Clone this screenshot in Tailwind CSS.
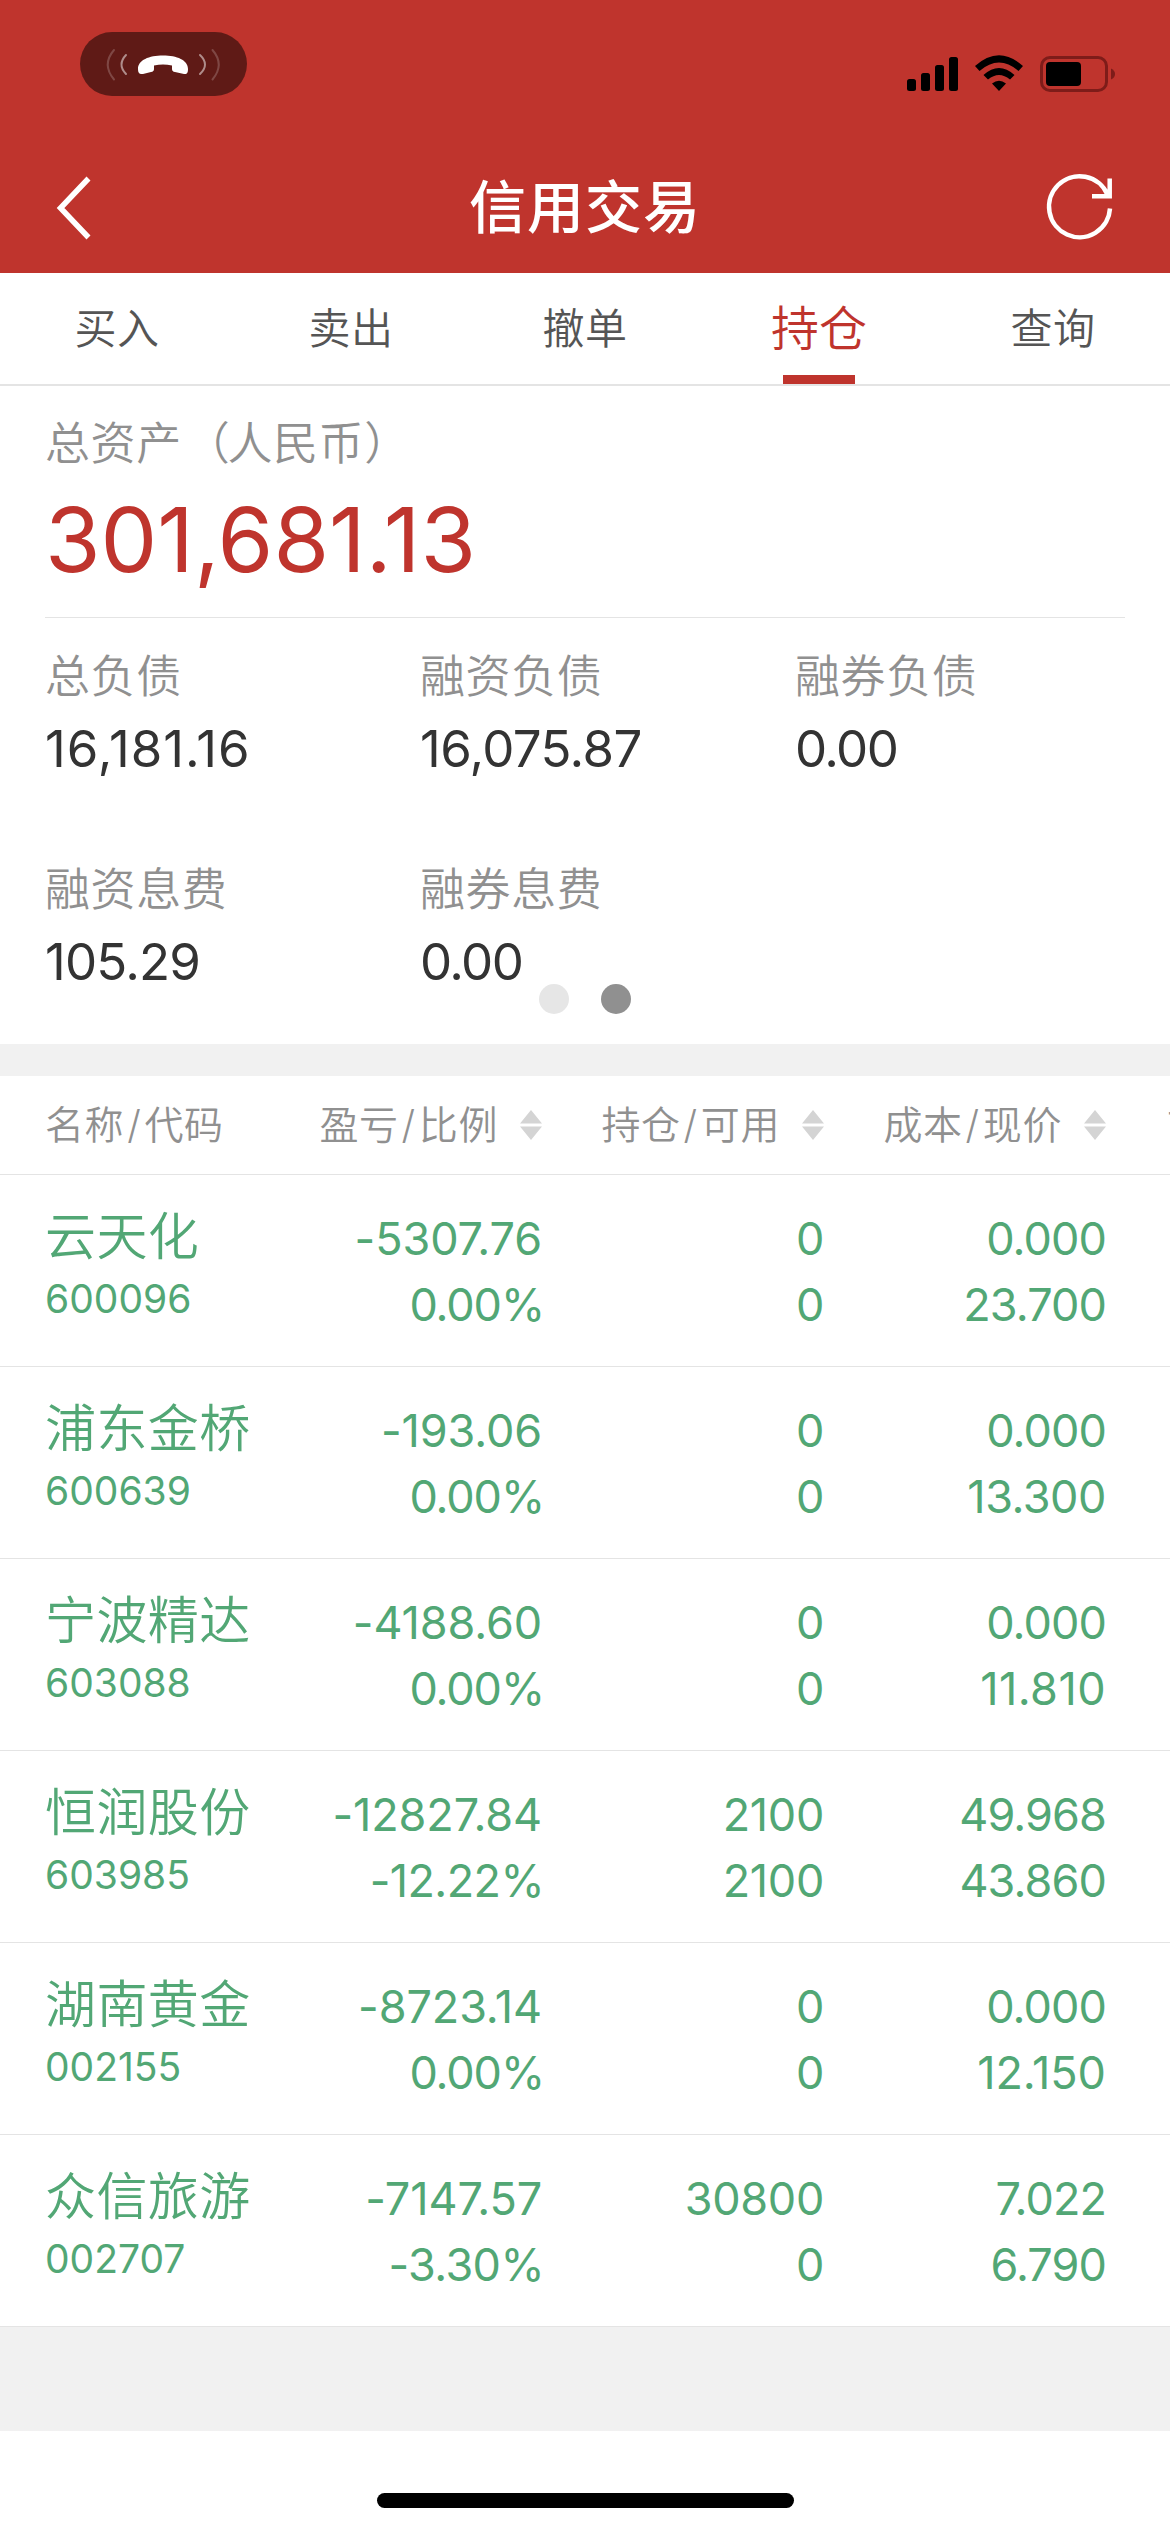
<!DOCTYPE html>
<html lang="zh-CN">
<head>
<meta charset="utf-8">
<title>信用交易</title>
<script src="https://cdn.jsdelivr.net/npm/@tailwindcss/browser@4"></script>
</head>
<body class="w-[1170px] h-[2532px] overflow-hidden bg-white flex flex-col font-['Inter','Noto_Sans_CJK_SC',sans-serif] text-[#333333]">
<header class="h-[273px] shrink-0 bg-[#bf342d] flex flex-col">
  <div class="h-[142px] flex justify-between items-start pl-[80px] pr-[54px]">
    <div class="mt-[32px] w-[167px] h-[64px] rounded-full bg-black/50">
      <svg class="w-[167px] h-[64px]" viewBox="80 32 167 64" fill="none" stroke="#fff" stroke-width="2" stroke-linecap="round">
        <path d="M138 69C138 60 149 55.500 163 55.500S188 60 188 69C188 73.500 186.500 74.500 184 74L175 72Q172 71.500 172 69V65.500Q163 63.500 154 65.500V69Q154 71.500 151 72L143 74C140 74.500 138 73.500 138 69Z" fill="#fff" stroke="none"/>
        <path d="M126 55Q117 64.500 126 74M200 55Q210 64.500 200 74" stroke-opacity=".5"/>
        <path d="M114 50Q101.500 64.500 114 79.500M212.500 50Q225 64.500 212.500 79.500" stroke-opacity=".2"/>
      </svg>
    </div>
    <svg class="mt-[50px] w-[212px] h-[48px]" viewBox="904 50 212 48">
      <rect x="907" y="79" width="9" height="12" rx="2.500"/><rect x="921" y="73" width="9" height="18" rx="2.500"/><rect x="935" y="65" width="9" height="26" rx="2.500"/><rect x="949" y="57" width="9" height="34" rx="2.500"/>
      <path d="M975 66Q999 44.500 1023 66L1018.500 71Q999 54 979.500 71ZM983.500 75Q999 61 1014.500 75L1010 79.500Q999 70.500 988 79.500ZM992 83.500Q999 78 1006 83.500L999 91Z"/>
      <rect x="1041.500" y="57.500" width="65" height="33" rx="8.500" fill="none" stroke="#7e1c19" stroke-width="3"/>
      <rect x="1046" y="62" width="35" height="24" rx="4"/>
      <path d="M1111 68.500Q1115 70.500 1115 74T1111 79.500Z" fill="#7e1c19"/>
    </svg>
  </div>
  <div class="h-[131px] grid grid-cols-[1fr_auto_1fr] items-center pl-[54px] pr-[54px]">
    <svg class="w-[64px] h-[66px]" viewBox="54 175 64 66" fill="none" stroke="#fff" stroke-width="5.500"><path d="M88.500 178.500L60.500 208L88.500 237.500"/></svg>
    <h1 class="text-[57px] leading-none font-medium text-white tracking-[1px]">信用交易</h1>
    <svg class="w-[72px] h-[72px] justify-self-end" viewBox="1044 171.500 72 72" fill="none" stroke="#fff" stroke-width="4.500"><path d="M1110 208A30.500 30.500 0 1 1 1107.500 194M1109.700 178V195.800H1092"/></svg>
  </div>
</header>
<nav class="h-[113px] shrink-0 grid grid-cols-5 grid-rows-[111px] border-b-2 border-[#e4e4e4] text-[42px] font-[350] text-[#555555] text-center leading-[112px] tracking-[0.6px]">
  <div>买入</div><div>卖出</div><div>撤单</div>
  <div class="relative text-[48px] text-[#bf342d] tracking-normal">持仓<span class="absolute bottom-0 left-1/2 -translate-x-1/2 w-[72px] h-[9px] bg-[#bf342d]"></span></div>
  <div>查询</div>
</nav>
<section class="relative h-[658px] shrink-0 px-[45px]">
  <div class="h-[232px] border-b border-[#e4e4e4] pt-[34px]">
    <div class="text-[45px] leading-[48px] font-[350] text-[#909090] tracking-[0.6px]">总资产<span class="ml-[3px]">（</span><span class="-ml-[3px]">人民币</span><span>）</span></div>
    <div class="mt-[17px] text-[90px] leading-[110px] text-[#bf342d]">301,681.13</div>
  </div>
  <div class="grid grid-cols-[375px_375px_330px] auto-rows-[213px] pt-[35px]" id="stats"></div>
  <div class="absolute left-[539px] top-[598px] flex gap-8">
    <span class="size-[30px] rounded-full bg-[#e6e6e6]"></span><span class="size-[30px] rounded-full bg-[#909090]"></span>
  </div>
</section>
<div class="h-[32px] shrink-0 bg-[#f1f1f1]"></div>
<div class="h-[99px] w-full overflow-hidden shrink-0 flex items-center border-b border-[#e4e4e4] pl-[45px] text-[39px] font-[350] tracking-[0.6px] text-[#909090] whitespace-nowrap" id="heads"></div>
<main class="shrink-0 text-[#52a775]" id="rows"></main>
<div class="h-[104px] shrink-0 bg-[#f1f1f1]"></div>
<footer class="flex-1 flex justify-center items-end pb-[24px]"><div class="w-[417px] h-[15px] rounded-full bg-black"></div></footer>
<script>
document.getElementById('stats').innerHTML = [['总负债','16,181.16',1],['融资负债','16,075.87',-0.6],['融券负债','0.00',-1.6],['融资息费','105.29',-0.8],['融券息费','0.00',-1.6]]
  .map(([a,b,s]) => `<div><div class="text-[45px] leading-[48px] font-[350] tracking-[0.6px] text-[#909090]">${a}</div><div class="mt-[18px] text-[51px] leading-[60px]" style="letter-spacing:${s}px">${b}</div></div>`).join('');
const sort = '<svg class="w-[22px] h-[30px] ml-[22px]" viewBox="0 0 22 30" fill="#d4d4d4"><path d="M11 0L22 13.500H0ZM0 16.500H22L11 30Z"/></svg>';
document.getElementById('heads').innerHTML = '<div class="w-[215px] shrink-0">名称<span class="mx-[3px]">/</span>代码</div>' +
  ['盈亏 比例','持仓 可用','成本 现价'].map(t => { const [a,b] = t.split(' ');
    return `<div class="w-[282px] shrink-0 flex items-center justify-end"><span>${a}<span class="mx-[3px]">/</span>${b}</span>${sort}</div>`; }).join('') +
  '<div class="ml-[61px] shrink-0">市值</div>';
// Tighten the wide digits; the narrow "1" needs its room back.
const spacing = v => v.endsWith('%') ? (v.startsWith('-') ? -0.6 : -1.1) : v.startsWith('-') ? -0.1 : v.includes('.') ? -0.9 + 0.45 * (v.split('1').length - 1) : -0.3;
const cell = v => `<div class="${v.endsWith('%') ? '-mr-[2px]' : ''}" style="letter-spacing:${spacing(v).toFixed(2)}px">${v}</div>`;
document.getElementById('rows').innerHTML = [
  ['云天化','600096','-5307.76','0.00%','0','0','0.000','23.700'],
  ['浦东金桥','600639','-193.06','0.00%','0','0','0.000','13.300'],
  ['宁波精达','603088','-4188.60','0.00%','0','0','0.000','11.810'],
  ['恒润股份','603985','-12827.84','-12.22%','2100','2100','49.968','43.860'],
  ['湖南黄金','002155','-8723.14','0.00%','0','0','0.000','12.150'],
  ['众信旅游','002707','-7147.57','-3.30%','30800','0','7.022','6.790']
].map(r => `<div class="h-[192px] flex border-b border-[#e4e4e4] pl-[45px]">
  <div class="w-[215px] shrink-0 pt-[34px] whitespace-nowrap"><div class="text-[51px] leading-[56px] font-[350] tracking-[0.4px]">${r[0]}</div><div class="text-[39px] leading-[48px] mt-[10px]">${r[1]}</div></div>
  ${[2,4,6].map(i => `<div class="w-[282px] shrink-0 pt-[31px] text-right text-[45px] leading-[66px]">${cell(r[i])}${cell(r[i+1])}</div>`).join('')}
</div>`).join('');
</script>
</body>
</html>
